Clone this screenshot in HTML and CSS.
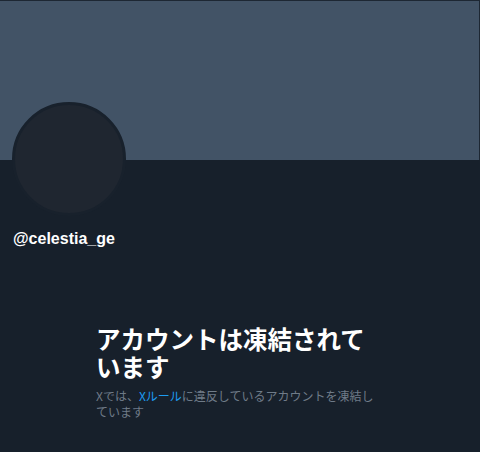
FILE: index.html
```html
<!DOCTYPE html>
<html lang="ja">
<head>
<meta charset="utf-8">
<link rel="stylesheet" href="styles.css">
</head>
<body>
<div class="page">
  <div class="banner"></div>
  <div class="profile">
    <div class="avatar"></div>
    <div class="handle">@celestia_ge</div>
  </div>
  <div class="empty">
    <h1 class="title">アカウントは凍結されています</h1>
    <p class="desc">Xでは、<a class="link" href="#">Xルール</a>に違反しているアカウントを凍結しています</p>
  </div>
</div>
</body>
</html>
```
FILE: styles.css
```css
html, body {
  margin: 0;
  padding: 0;
  background: #17202b;
}
.page {
  width: 480px;
  height: 452px;
  overflow: hidden;
  background: #17202b;
  font-family: "Noto Sans CJK JP", "Liberation Sans", sans-serif;
}
.banner {
  height: 159px;
  background: #425366;
  border-top: 1px solid #1d2733;
  border-right: 1px solid #1d2733;
}
.profile {
  padding: 0 12px;
}
.avatar {
  width: 108px;
  height: 108px;
  margin-top: -58px;
  border-radius: 50%;
  background: #1f2630;
  border: 3px solid #18212c;
}
.handle {
  margin-top: 13px;
  padding-left: 1px;
  font-family: "Liberation Sans", Arial, sans-serif;
  font-weight: bold;
  font-size: 16px;
  line-height: 20px;
  color: #ffffff;
}
.empty {
  width: 280px;
  margin: 76px 0 0 96px;
}
.title {
  margin: 0;
  font-size: 24.5px;
  line-height: 28px;
  font-weight: bold;
  color: #ffffff;
}
.desc {
  margin: 7px 0 0;
  font-size: 12px;
  line-height: 16px;
  color: #6f7b88;
}
.link {
  color: #1d9bf0;
  text-decoration: none;
}
```
